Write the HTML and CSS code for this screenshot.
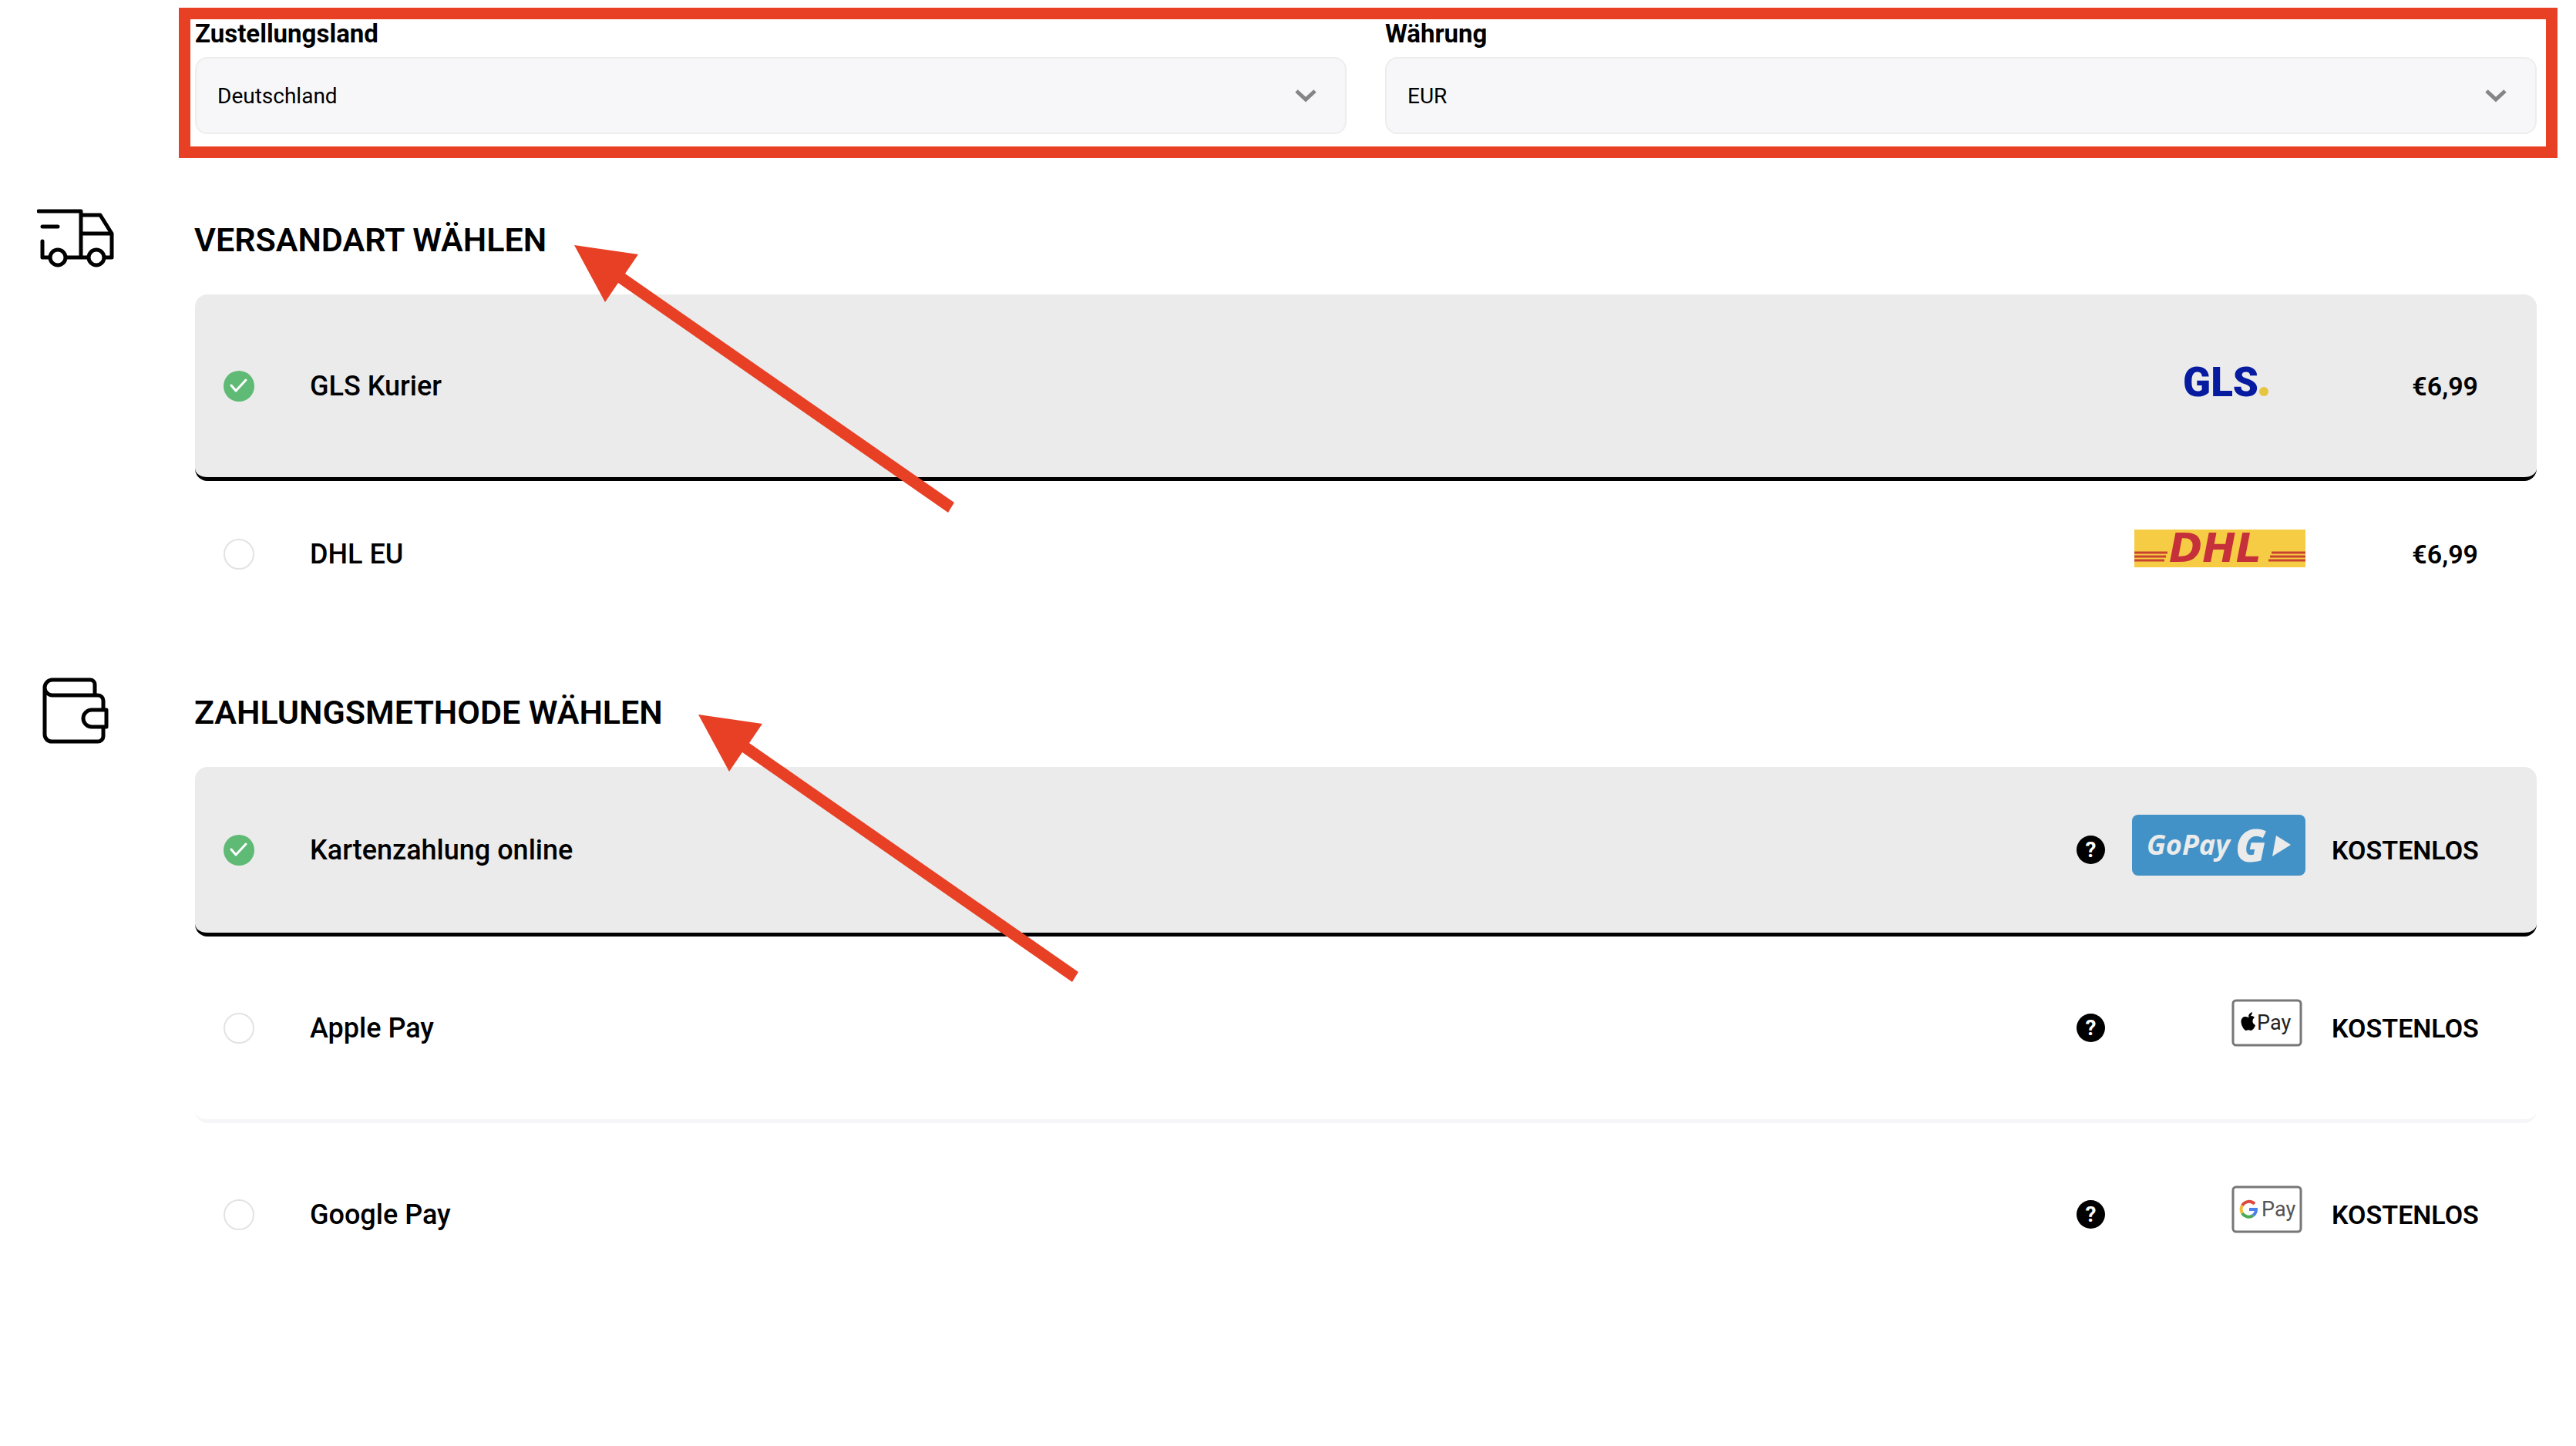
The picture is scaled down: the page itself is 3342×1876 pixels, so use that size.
FILE: index.html
```html
<!DOCTYPE html>
<html lang="de">
    <head>
        <meta charset="utf-8">
        <title>Versand und Zahlung</title>
        <link rel="stylesheet" href="styles.css">
    </head>
    <body>
    <form>
        <div class="region">
            <div class="field">
                <label for="country">Zustellungsland</label>
                <select id="country">
                    <option>Deutschland</option>
                </select>
            </div>
            <div class="field">
                <label for="currency">Währung</label>
                <select id="currency">
                    <option>EUR</option>
                </select>
            </div>
        </div>

        <section>
            <div class="head">
                <div class="head-icon">
                    <svg width="100" height="76" viewBox="0 0 100 76" fill="none" stroke="#000" stroke-width="5" stroke-linecap="round" stroke-linejoin="round">
                        <path d="M2 3h55v60M57 8h25l15 24v31h-8M57 32h40M7 23h20M7 42v21h8M38 63h28"/>
                        <circle cx="27" cy="63" r="10"/>
                        <circle cx="77" cy="63" r="10"/>
                    </svg>
                </div>
                <h2>VERSANDART WÄHLEN</h2>
            </div>
            <div class="options">
                <div class="option selected">
                    <input type="radio" name="shipping" id="gls" checked>
                    <label for="gls">GLS Kurier</label>
                    <svg class="logo" width="225" height="80" viewBox="0 0 225 80">
                        <text class="gls" x="66" y="59">GLS</text>
                        <circle cx="171" cy="53" r="6" fill="#e6c540"/>
                    </svg>
                    <span class="price">€6,99</span>
                </div>
                <div class="option">
                    <input type="radio" name="shipping" id="dhl">
                    <label for="dhl">DHL EU</label>
                    <svg class="logo" width="225" height="80" viewBox="0 0 225 80">
                        <path fill="#f7cc45" d="M3 14h222v49H3z"/>
                        <path stroke="#c8442f" stroke-width="3" d="M3 44h43M3 49h41M3 54h39M181 44h44M179 49h46M177 54h48"/>
                        <text class="dhl" x="48" y="56">DHL</text>
                    </svg>
                    <span class="price">€6,99</span>
                </div>
            </div>
            <svg class="arrow arrow-shipping" width="494" height="348" viewBox="0 0 494 348">
                <path d="M0 0 83 12 66 37 493 334 485 347 57 49 40 74z"/>
            </svg>
        </section>

        <section>
            <div class="head">
                <div class="head-icon">
                    <svg width="86" height="86" viewBox="0 0 86 86" fill="none" stroke="#000" stroke-width="5" stroke-linejoin="round">
                        <path d="M68 23V9a6 6 0 0 0-6-6H13a10 10 0 0 0 0 20h59a7 7 0 0 1 7 7v12M3 13v61a9 9 0 0 0 9 9h60a7 7 0 0 0 7-7V64"/>
                        <path d="M83 42H64a11 11 0 0 0 0 22h19z"/>
                    </svg>
                </div>
                <h2>ZAHLUNGSMETHODE WÄHLEN</h2>
            </div>
            <div class="options">
                <div class="option selected payment">
                    <input type="radio" name="payment" id="card" checked>
                    <label for="card">Kartenzahlung online</label>
                    <button type="button" class="help">?</button>
                    <svg class="logo" width="225" height="80" viewBox="0 0 225 80">
                        <rect width="225" height="79" rx="8" fill="#4392c7"/>
                        <text class="gopay" x="19" y="52">GoPay</text>
                        <text class="gopay-g" x="134" y="61">G</text>
                        <path fill="#ebebeb" d="M187 27 206 39 182 54z"/>
                    </svg>
                    <span class="price">KOSTENLOS</span>
                </div>
                <div class="option wallet line">
                    <input type="radio" name="payment" id="apple">
                    <label for="apple">Apple Pay</label>
                    <button type="button" class="help">?</button>
                    <svg class="logo" width="225" height="80" viewBox="0 0 225 80">
                        <rect x="131" y="10" width="88" height="58" rx="4" fill="#fff" stroke="#777" stroke-width="3"/>
                        <path d="M151 32c3-3 6-2 8 0-4 3-3 8 1 10-1 4-4 7-6 7-2-1-4-1-6 0-4-1-9-12-5-16 2-3 5-2 8-1zM151 31c0-3 2-5 5-6 0 3-2 6-5 6z"/>
                        <text class="apple-pay" x="162" y="48">Pay</text>
                    </svg>
                    <span class="price">KOSTENLOS</span>
                </div>
                <div class="option wallet">
                    <input type="radio" name="payment" id="google">
                    <label for="google">Google Pay</label>
                    <button type="button" class="help">?</button>
                    <svg class="logo" width="225" height="80" viewBox="0 0 225 80">
                        <rect x="131" y="10" width="88" height="58" rx="4" fill="#fff" stroke="#777" stroke-width="3"/>
                        <g fill="none" stroke-width="4">
                            <path stroke="#dd4b3e" d="M159 32a10 10 0 0 0-16 2"/>
                            <path stroke="#f0bd3a" d="M143 34a10 10 0 0 0 0 10"/>
                            <path stroke="#4caa57" d="M143 44a10 10 0 0 0 14 3"/>
                            <path stroke="#4a80e8" d="M157 47a10 10 0 0 0 4-8h-9"/>
                        </g>
                        <text class="google-pay" x="168" y="48">Pay</text>
                    </svg>
                    <span class="price">KOSTENLOS</span>
                </div>
            </div>
            <svg class="arrow arrow-payment" width="494" height="348" viewBox="0 0 494 348">
                <path d="M0 0 83 12 66 37 493 334 485 347 57 49 40 74z"/>
            </svg>
        </section>
    </form>
    </body>
</html>
```
FILE: styles.css
```css
* {
    box-sizing: border-box;
}

body {
    margin: 0;
    background-color: #fff;
    color: #000;
    font-family: Roboto, "Open Sans", sans-serif;
}

/* country and currency */
.region {
    display: flex;
    gap: 50px;
    margin: 10px 24px 0 232px;
    padding: 1px 12px 16px 6px;
    border: 15px solid #e84025;
}

.field {
    flex: 1;
}

.field label {
    display: block;
    height: 48px;
    line-height: 36px;
    font-size: 33px;
    font-weight: bold;
}

select {
    display: block;
    width: 100%;
    height: 100px;
    padding: 0 30px 0 27px;
    border: 2px solid #ededed;
    border-radius: 16px;
    appearance: none;
    background: #f7f7f9 url("data:image/svg+xml,%3Csvg xmlns='http://www.w3.org/2000/svg' width='28' height='18'%3E%3Cpath d='M2 3l12 11L26 3' fill='none' stroke='%23858585' stroke-width='5'/%3E%3C/svg%3E") no-repeat right 37px center;
    color: #000;
    font-family: inherit;
    font-size: 28px;
}

/* sections */
section {
    position: relative;
    padding: 0 51px 0 253px;
}

.head {
    display: flex;
    align-items: center;
    height: 177px;
    margin-left: -253px;
    padding: 76px 0 41px;
}

.head-icon {
    display: flex;
    justify-content: center;
    width: 196px;
    margin: 0 56px 4px 0;
}

h2 {
    margin: 0;
    line-height: 60px;
    font-size: 43px;
    font-weight: 600;
}

.option {
    display: flex;
    align-items: center;
    height: 194px;
    padding: 0 76px 0 37px;
    border-bottom: 5px solid transparent;
    border-radius: 16px;
    font-size: 36px;
    font-weight: 500;
}

.selected {
    height: 242px;
    background-color: #ebebeb;
    border-bottom-color: #000;
}

.payment {
    height: 220px;
}

.wallet {
    height: 242px;
}

.line {
    border-bottom-color: #f6f6f9;
}

.option label {
    flex: 1;
    margin-left: 72px;
}

input[type="radio"] {
    width: 40px;
    height: 40px;
    margin: 0;
    border: 2px solid #e3e3e3;
    border-radius: 50%;
    appearance: none;
    background-color: #fff;
}

input[type="radio"]:checked {
    border: none;
    background: #5fba75 url("data:image/svg+xml,%3Csvg xmlns='http://www.w3.org/2000/svg' width='40' height='40'%3E%3Cpath d='M10 19l6 7 13-14' fill='none' stroke='%23fff' stroke-width='3' stroke-linecap='round' stroke-linejoin='round'/%3E%3C/svg%3E") no-repeat center;
}

.help {
    width: 37px;
    height: 37px;
    margin-right: 35px;
    padding: 0;
    border: none;
    border-radius: 50%;
    background-color: #000;
    color: #fff;
    font-family: inherit;
    font-size: 28px;
    font-weight: bold;
    line-height: 36px;
}

.price {
    width: 190px;
    margin-left: 34px;
    font-size: 34px;
    font-weight: 600;
    text-align: right;
    white-space: nowrap;
}

/* carrier and payment logos */
.logo {
    margin-bottom: 12px;
    overflow: visible;
}

.gls {
    fill: #061ba0;
    font-size: 53px;
    font-weight: 900;
}

.dhl {
    fill: #c5303a;
    font-family: "DejaVu Sans", sans-serif;
    font-size: 52px;
    font-style: italic;
    font-weight: bold;
}

.gopay {
    fill: #ebebeb;
    font-family: "Open Sans", sans-serif;
    font-size: 36px;
    font-style: italic;
    font-weight: bold;
}

.gopay-g {
    fill: #ebebeb;
    font-family: "Open Sans", sans-serif;
    font-size: 58px;
    font-style: italic;
    font-weight: 800;
}

.apple-pay {
    fill: #222;
    font-size: 27px;
    font-weight: 400;
}

.google-pay {
    fill: #555;
    font-size: 27px;
    font-weight: 400;
}

/* red pointers over the headings */
.arrow {
    position: absolute;
    fill: #e84025;
    pointer-events: none;
}

.arrow-shipping {
    top: 113px;
    left: 745px;
}

.arrow-payment {
    top: 109px;
    left: 906px;
}
```
